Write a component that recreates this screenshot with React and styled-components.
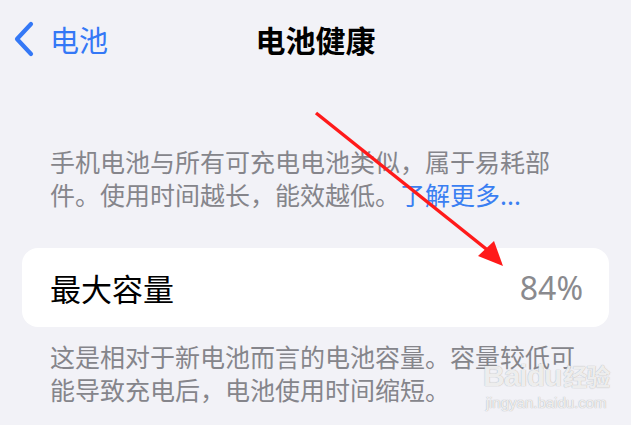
import styled, { createGlobalStyle } from "styled-components";

const GlobalStyle = createGlobalStyle`
  html, body {
    margin: 0;
    padding: 0;
    background: #f2f2f7;
  }
  body {
    font-family: "Noto Sans CJK SC", "Noto Sans", sans-serif;
    -webkit-font-smoothing: antialiased;
  }
`;

const Page = styled.div`
  position: relative;
  width: 631px;
  height: 425px;
  overflow: hidden;
  background: #f2f2f7;
`;

const NavBar = styled.div`
  position: relative;
  display: flex;
  align-items: center;
  height: 78px;
  padding: 0 12px;
`;

const BackButton = styled.div`
  display: flex;
  align-items: center;
  gap: 16px;
  color: #3478f6;
  font-size: 29px;
  line-height: 1;
`;

const Title = styled.div`
  position: absolute;
  left: 0;
  right: 0;
  text-align: center;
  font-size: 30px;
  font-weight: 700;
  color: #000;
  pointer-events: none;
`;

const Content = styled.div`
  display: flex;
  flex-direction: column;
  padding-top: 67px;
`;

const Note = styled.p`
  margin: 0;
  padding: 0 28px 0 50px;
  font-size: 25px;
  line-height: 33px;
  color: #85858b;
  margin-bottom: ${(p) => p.$gap || 0}px;
`;

const Link = styled.span`
  color: #3a7ff2;
`;

const Card = styled.div`
  display: flex;
  align-items: center;
  justify-content: space-between;
  height: 79px;
  margin: 0 22px 13px;
  padding: 0 26px 0 28px;
  background: #fff;
  border-radius: 16px;
`;

const Label = styled.span`
  font-size: 31px;
  color: #000;
`;

const Value = styled.span`
  font-family: "Noto Sans", "Open Sans", sans-serif;
  font-size: 32px;
  color: #8a8a8e;
`;

const Overlay = styled.svg`
  position: absolute;
  left: 0;
  top: 0;
  pointer-events: none;
`;

const Watermark = styled.div`
  position: absolute;
  left: 483px;
  top: 358px;
  display: flex;
  flex-direction: column;
  align-items: center;
  color: rgba(255, 255, 255, 0.8);
  text-shadow: 0 0 1px rgba(160, 160, 160, 0.6), 0 0 1px rgba(160, 160, 160, 0.6);
  font-family: "Liberation Sans", Arial, sans-serif;
  pointer-events: none;
`;

const Brand = styled.div`
  font-size: 30px;
  font-weight: 700;
  line-height: 36px;
  letter-spacing: -1px;
  span {
    font-family: "Noto Sans CJK SC", sans-serif;
    font-size: 24px;
    margin-left: 2px;
  }
`;

const Site = styled.div`
  font-size: 15px;
  line-height: 18px;
`;

function Chevron() {
  return (
    <svg width="22" height="36" viewBox="0 0 22 36">
      <path
        d="M19 3 L5 18 L19 33"
        fill="none"
        stroke="#3478f6"
        strokeWidth="4.2"
        strokeLinecap="round"
        strokeLinejoin="round"
      />
    </svg>
  );
}

export default function App() {
  return (
    <Page>
      <GlobalStyle />
      <NavBar>
        <BackButton>
          <Chevron />
          <span>电池</span>
        </BackButton>
        <Title>电池健康</Title>
      </NavBar>
      <Content>
        <Note $gap={37}>
          手机电池与所有可充电电池类似，属于易耗部
          <br />
          件。使用时间越长，能效越低。<Link>了解更多...</Link>
        </Note>
        <Card>
          <Label>最大容量</Label>
          <Value>84%</Value>
        </Card>
        <Note>
          这是相对于新电池而言的电池容量。容量较低可
          <br />
          能导致充电后，电池使用时间缩短。
        </Note>
      </Content>
      <Watermark>
        <Brand>
          Baidu<span>经验</span>
        </Brand>
        <Site>jingyan.baidu.com</Site>
      </Watermark>
      <Overlay width="631" height="425" viewBox="0 0 631 425">
        <line x1="316" y1="113" x2="490" y2="252" stroke="#ff1a1a" strokeWidth="3.5" />
        <polygon points="503,266 478,256 494,241" fill="#ff1a1a" />
      </Overlay>
    </Page>
  );
}
